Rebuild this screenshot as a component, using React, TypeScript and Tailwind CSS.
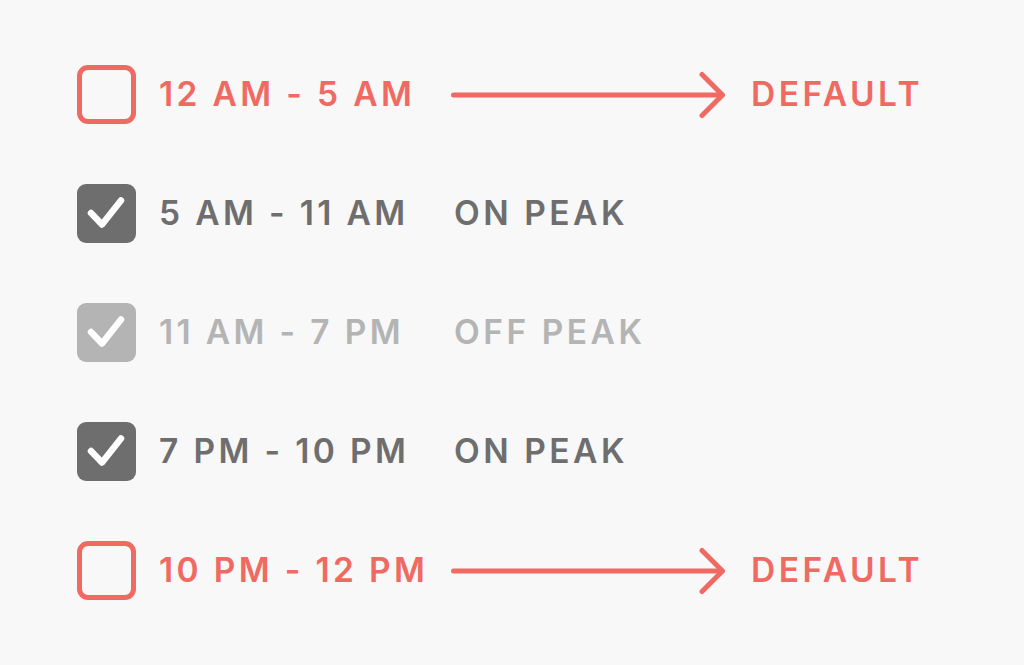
import React from "react";

const RED = "#ef6a62";

type Row = {
  time: string;
  state: "off" | "on" | "muted";
  label: string;
};

const rows: Row[] = [
  { time: "12 AM - 5 AM", state: "off", label: "DEFAULT" },
  { time: "5 AM - 11 AM", state: "on", label: "ON PEAK" },
  { time: "11 AM - 7 PM", state: "muted", label: "OFF PEAK" },
  { time: "7 PM - 10 PM", state: "on", label: "ON PEAK" },
  { time: "10 PM - 12 PM", state: "off", label: "DEFAULT" },
];

function Box({ state }: { state: Row["state"] }) {
  if (state === "off") {
    return <div className="w-[59px] h-[59px] shrink-0 rounded-[11px] border-[5px] border-[#ef6a62]" />;
  }
  return (
    <div
      className={
        "w-[59px] h-[59px] shrink-0 rounded-[9px] flex items-center justify-center " +
        (state === "on" ? "bg-[#6e6e6e]" : "bg-[#b4b4b4]")
      }
    >
      <svg width="59" height="59" viewBox="0 0 59 59">
        <path
          d="M14 29 L25 40.5 L44 16.5"
          fill="none"
          stroke="white"
          strokeWidth="6.5"
          strokeLinecap="round"
          strokeLinejoin="round"
        />
      </svg>
    </div>
  );
}

function Arrow() {
  return (
    <svg width="276" height="48" viewBox="0 0 276 48" className="shrink-0">
      <path d="M2.5 24 H271" stroke={RED} strokeWidth="5" strokeLinecap="round" fill="none" />
      <path
        d="M251 3.5 L271.5 24 L251 44.5"
        stroke={RED}
        strokeWidth="5"
        strokeLinecap="round"
        strokeLinejoin="round"
        fill="none"
      />
    </svg>
  );
}

export default function App() {
  return (
    <div className="w-[1024px] h-[665px] bg-[#f8f8f8] pl-[77px] pt-[65px] font-['Inter',sans-serif]">
      <div className="flex flex-col gap-[60px]">
        {rows.map((r, i) => {
          const color =
            r.state === "off" ? "text-[#ef6a62]" : r.state === "on" ? "text-[#6e6e6e]" : "text-[#b4b4b4]";
          return (
            <div key={i} className="flex items-center h-[59px]">
              <Box state={r.state} />
              <div
                className={
                  "w-[292px] ml-[23px] shrink-0 text-[33.5px] font-semibold tracking-[0.1em] whitespace-nowrap " + color
                }
              >
                {r.time}
              </div>
              {r.state === "off" ? (
                <div className="flex items-center">
                  <Arrow />
                  <span className={"ml-[24px] text-[33.5px] font-semibold tracking-[0.105em] " + color}>{r.label}</span>
                </div>
              ) : (
                <span className={"ml-[3px] text-[33.5px] font-semibold tracking-[0.105em] " + color}>{r.label}</span>
              )}
            </div>
          );
        })}
      </div>
    </div>
  );
}
